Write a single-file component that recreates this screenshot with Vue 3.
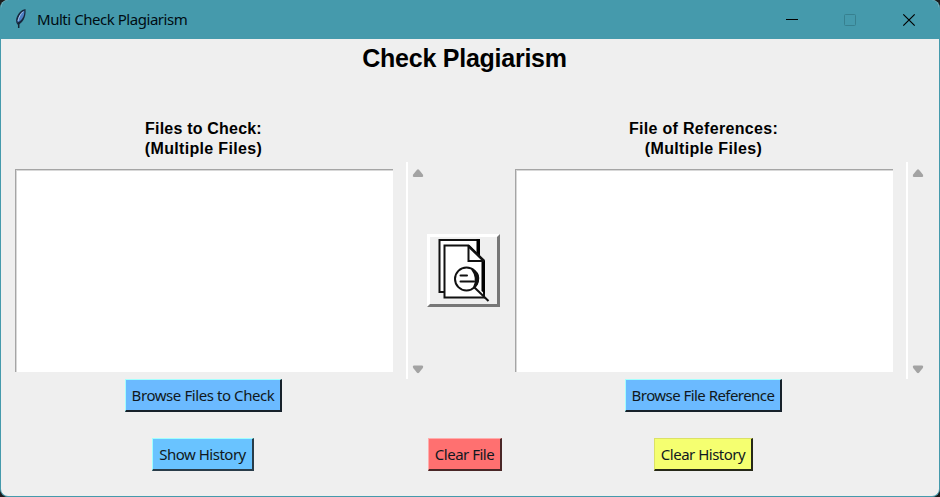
<script setup>
const panes = [
  { id: 'check', title: 'Files to Check:', browse: 'Browse Files to Check' },
  { id: 'reference', title: 'File of References:', browse: 'Browse File Reference' },
]
</script>

<template>
  <div class="desktop">
    <div class="window">
      <header class="titlebar">
        <svg class="feather" width="14" height="22" viewBox="0 0 14 22">
          <path d="M11.500 1C7.500 1.600 3.200 6 2.200 11C1.800 13.500 2.500 15.500 4 17C8.500 14.500 12.200 10 11.500 1Z" fill="#17273d" />
          <path d="M10.300 2.500C6.500 5 3.800 8.500 3.500 14.500C7.500 12.500 10.800 8.500 10.300 2.500Z" fill="#4d7fc4" />
          <path d="M9 3.700C6.500 6 4.500 9.500 4 13" fill="none" stroke="#a9c5e8" stroke-width="1" />
          <path d="M4.700 14.500V20" stroke="#132635" stroke-width="1.500" />
        </svg>
        <span class="caption">Multi Check Plagiarism</span>
        <svg class="controls" width="132" height="14" viewBox="0 0 132 14">
          <path d="M0 6.500H12" stroke="#000" />
          <rect x="58.500" y="1.500" width="11" height="11" rx="1" fill="none" stroke="#37808f" />
          <path d="M117.300 1.300L128.700 12.700M128.700 1.300L117.300 12.700" stroke="#000" stroke-width="1.200" />
        </svg>
      </header>
      <main>
        <h1>Check Plagiarism</h1>
        <div class="body">
          <template v-for="(pane, i) in panes" :key="pane.id">
            <section class="pane">
              <h2><span :class="'t-' + pane.id">{{ pane.title }}</span><br /><span class="multi">(Multiple Files)</span></h2>
              <div class="list"></div>
              <button class="btn blue" :class="pane.id"><span>{{ pane.browse }}</span></button>
            </section>
            <div class="scroll">
              <svg width="12" height="9" viewBox="0 0 12 9"><path d="M5 .7Q6 0 7 .7L10.800 5.500Q11.800 8 10 8H2Q.2 8 1.200 5.500Z" fill="#a3a3a3" /></svg>
              <svg width="12" height="9" viewBox="0 0 12 9"><path d="M5 7.800Q6 8.500 7 7.800L10.800 3Q11.800.5 10 .5H2Q.2.5 1.200 3Z" fill="#a3a3a3" /></svg>
            </div>
            <button v-if="i === 0" class="scan" aria-label="Check">
              <svg width="66" height="66" viewBox="0 0 66 66">
                <path d="M9.500 3H49V55H9.500Z" fill="#fff" stroke="#111" stroke-width="2" />
                <path d="M46.500 2H50V20L46.500 16Z" fill="#000" />
                <path d="M14.500 8.500H38.500L54 24V60.500H14.500Z" fill="#fff" stroke="#111" stroke-width="2" />
                <path d="M51.500 24H55V57L51.500 54Z" fill="#000" />
                <path d="M38.500 8.500V24H54" fill="none" stroke="#111" stroke-width="2" />
                <path d="M38.500 9L54 24" stroke="#111" stroke-width="2.500" />
                <circle cx="36.500" cy="42" r="11.500" fill="#fff" stroke="#111" stroke-width="2" />
                <path d="M42 32.500Q48.500 41 43.500 51Q48.500 47 48.500 41Q48.500 35.500 42 32.500Z" fill="#111" stroke="#111" stroke-width="1.500" />
                <path d="M30.500 38.500H37M30.500 44.500H44" stroke="#111" stroke-width="2" stroke-linecap="round" />
                <path d="M44.500 50.500L58.500 64" stroke="#111" stroke-width="2" />
              </svg>
            </button>
          </template>
        </div>
        <footer>
          <div class="cell"><button class="btn sky show"><span>Show History</span></button></div>
          <div class="cell"><button class="btn red"><span>Clear File</span></button></div>
          <div class="cell"><button class="btn yellow"><span>Clear History</span></button></div>
        </footer>
      </main>
    </div>
  </div>
</template>

<style>
body { margin: 0; overflow: hidden; }
</style>

<style scoped>
.desktop { width: 940px; height: 497px; background: #1c1c1c; }
.window { box-sizing: border-box; width: 940px; height: 497px; border: 1px solid #459aac; border-top: 0; border-radius: 8px; overflow: hidden; background: #efefef; }
.titlebar { display: flex; align-items: center; height: 39px; background: #459aac; box-sizing: border-box; padding: 0 21px 0 13px; }
.feather { flex: none; margin-top: -1px; }
.caption { margin: -2px 0 0 9px; font: 15px/20px "Noto Sans", sans-serif; letter-spacing: -.46px; color: #000c12; white-space: nowrap; }
.controls { margin-left: auto; }
h1 { margin: 0; height: 82px; padding-top: 4px; box-sizing: border-box; width: 927px; text-align: center; font: bold 25px/30px "Liberation Sans", sans-serif; letter-spacing: -.25px; color: #000; }
.body { display: grid; grid-template-columns: 405px 21px 74px 405px 33px; }
.pane { display: flex; flex-direction: column; align-items: center; }
h2 { box-sizing: border-box; margin: -2px 0 0; height: 50px; text-align: center; font: bold 16px/20px "Liberation Sans", sans-serif; color: #000; }
.t-check { letter-spacing: .2px; }
.t-reference { letter-spacing: .32px; }
.multi { letter-spacing: .33px; }
.list { box-sizing: border-box; width: 378px; height: 203px; background: #fff; border-top: 1px solid #a5a5a5; border-left: 1px solid #a5a5a5; box-shadow: inset 1px 1px #d8d8d8; }
.btn { box-sizing: border-box; height: 33px; border: 2px solid; padding: 1px 0 0; font: 15px/28px "Noto Sans", sans-serif; color: #101820; white-space: nowrap; display: flex; justify-content: center; align-items: flex-start; border-radius: 0; }
.btn span { height: 27px; }
.btn.check, .btn.reference { margin-top: 7px; width: 157px; }
.blue { background: #6bbaff; border-color: #a4ffff #17212a #17212a #a4ffff; border-top-width: 1px; border-left-width: 1px; }
.sky { background: #69c3ff; border-color: #a0ffff #293c49 #293c49 #a0ffff; border-top-width: 1px; border-left-width: 1px; width: 102px; margin-right: 1px; }
.red { background: #ff7070; border-color: #ffadad #492626 #492626 #ffadad; border-top-width: 1px; border-left-width: 1px; width: 74px; flex: none; margin-left: 2px; }
.yellow { background: #f5ff70; border-color: #dbe166 #262818 #262818 #dbe166; border-top-width: 1px; border-left-width: 1px; width: 99px; }
.check { letter-spacing: -.42px; }
.reference { letter-spacing: -.55px; }
.show, .red, .yellow { letter-spacing: -.5px; }
.scroll { display: flex; flex-direction: column; justify-content: space-between; box-sizing: border-box; height: 217px; margin-top: 41px; padding: 7px 0 5px 4px; border-left: 2px solid #fff; }
.scan { box-sizing: border-box; width: 73px; height: 73px; margin-top: 113px; padding: 0; border: 3px solid; border-color: #fff #777 #777 #fff; background: #efefef; display: flex; }
.scan svg { flex: none; }
footer { display: grid; grid-template-columns: 405px 21px 74px 405px; margin-top: 26px; }
.cell { display: flex; justify-content: center; }
.cell:nth-child(2) { grid-column: 3; }
</style>
